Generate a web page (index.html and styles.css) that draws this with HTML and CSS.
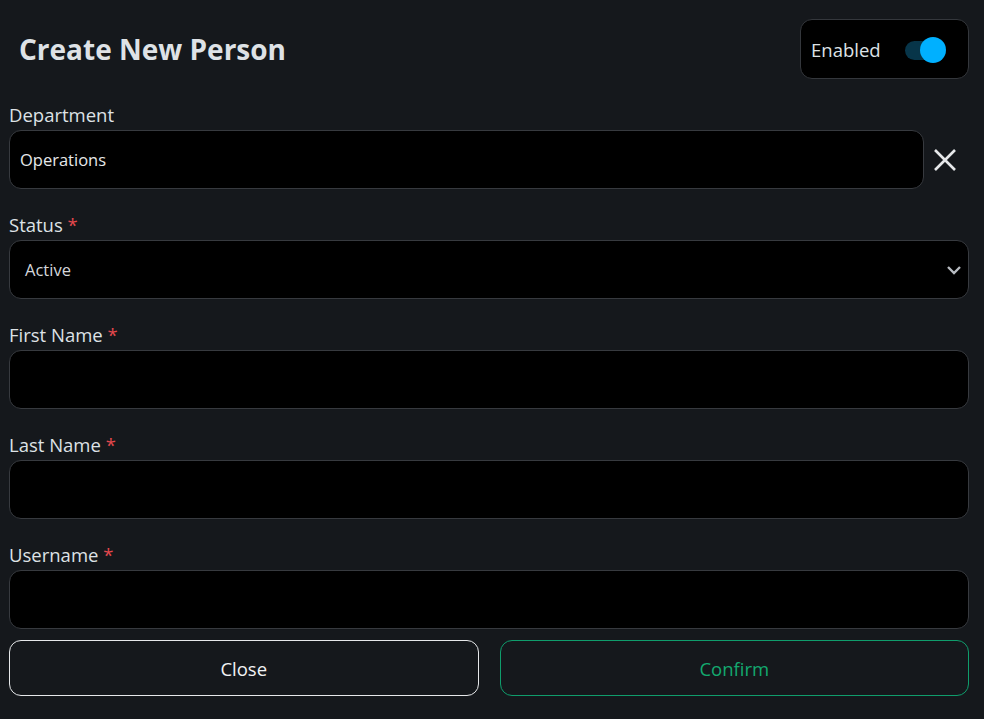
FILE: index.html
```html
<!DOCTYPE html>
<html lang="en">
<head>
<meta charset="utf-8">
<title>Create New Person</title>
<link rel="stylesheet" href="styles.css">
</head>
<body>
<div class="dialog">
  <header class="head">
    <h1 class="title">Create New Person</h1>
    <div class="enabled">
      <span class="enabled-label">Enabled</span>
      <span class="toggle"><span class="track"></span><span class="thumb"></span></span>
    </div>
  </header>

  <div class="field">
    <label class="label">Department</label>
    <div class="row">
      <div class="input">Operations</div>
      <button class="clear" aria-label="Clear">
        <svg width="24" height="24" viewBox="0 0 24 24"><path d="M2 2L22 22M22 2L2 22" stroke="#e6e8ea" stroke-width="2.6" stroke-linecap="butt" fill="none"/></svg>
      </button>
    </div>
  </div>

  <div class="field">
    <label class="label">Status <span class="req">*</span></label>
    <div class="input select">
      <span class="select-val">Active</span>
      <svg class="chev" width="16" height="10" viewBox="0 0 16 10"><path d="M2 2L8 8L14 2" stroke="#b8bcc2" stroke-width="2.4" fill="none"/></svg>
    </div>
  </div>

  <div class="field">
    <label class="label">First Name <span class="req">*</span></label>
    <div class="input"></div>
  </div>

  <div class="field">
    <label class="label">Last Name <span class="req">*</span></label>
    <div class="input"></div>
  </div>

  <div class="field">
    <label class="label">Username <span class="req">*</span></label>
    <div class="input"></div>
  </div>

  <div class="actions">
    <button class="btn btn-close">Close</button>
    <button class="btn btn-confirm">Confirm</button>
  </div>
</div>
</body>
</html>
```

FILE: styles.css
```css
* { box-sizing: border-box; }
html, body {
  margin: 0;
  background: #15181c;
  font-family: "Open Sans", "Noto Sans", sans-serif;
  color: #dee2e6;
}
.dialog {
  padding: 19px 15px 0 9px;
  display: flex;
  flex-direction: column;
}
.head {
  display: flex;
  justify-content: space-between;
  align-items: center;
  height: 60px;
  margin-bottom: 25px;
}
.title {
  margin: 0 0 0 10px;
  font-size: 28px;
  font-weight: 700;
  color: #dee2e6;
}
.enabled {
  width: 169px;
  height: 60px;
  background: #000;
  border: 1px solid #34373c;
  border-radius: 12px;
  display: flex;
  align-items: center;
  padding: 0 0 0 10px;
}
.enabled-label {
  font-size: 18.5px;
  color: #dee2e6;
}
.toggle {
  position: relative;
  width: 44px;
  height: 26px;
  margin-left: 22px;
  margin-top: 2px;
}
.track {
  position: absolute;
  left: 2px;
  top: 4px;
  width: 38px;
  height: 19px;
  border-radius: 10px;
  background: #073549;
}
.thumb {
  position: absolute;
  left: 17px;
  top: 0;
  width: 26px;
  height: 26px;
  border-radius: 50%;
  background: #00b0ff;
}
.field {
  display: flex;
  flex-direction: column;
  margin-bottom: 25px;
}
.label {
  font-size: 18.5px;
  line-height: 22px;
  height: 24px;
  margin-bottom: 2px;
  color: #dee2e6;
}
.req { color: #e5484d; }
.row {
  display: flex;
  align-items: center;
}
.row .input { flex: 1; }
.input {
  height: 59px;
  background: #000;
  border: 1px solid #373a3f;
  border-radius: 12px;
  display: flex;
  align-items: center;
  padding: 0 10px;
  font-size: 16.5px;
  color: #e6e8ea;
}
.clear {
  width: 45px;
  height: 40px;
  background: none;
  border: 0;
  padding: 0 4px 0 0;
  display: flex;
  align-items: center;
  justify-content: center;
}
.select {
  justify-content: space-between;
  padding: 0 6px 0 15px;
}
.select-val { color: #d4d7db; }
.chev { margin-top: 1px; }
.actions {
  display: flex;
  gap: 21px;
  margin-top: -14px;
}
.btn {
  flex: 1;
  height: 56px;
  border-radius: 12px;
  background: transparent;
  font-family: "Open Sans", "Noto Sans", sans-serif;
  font-size: 18.5px;
}
.btn-close {
  border: 1px solid #e6e8ea;
  color: #f1f3f5;
}
.btn-confirm {
  border: 1px solid #0f9d6c;
  color: #13a96f;
}
```
